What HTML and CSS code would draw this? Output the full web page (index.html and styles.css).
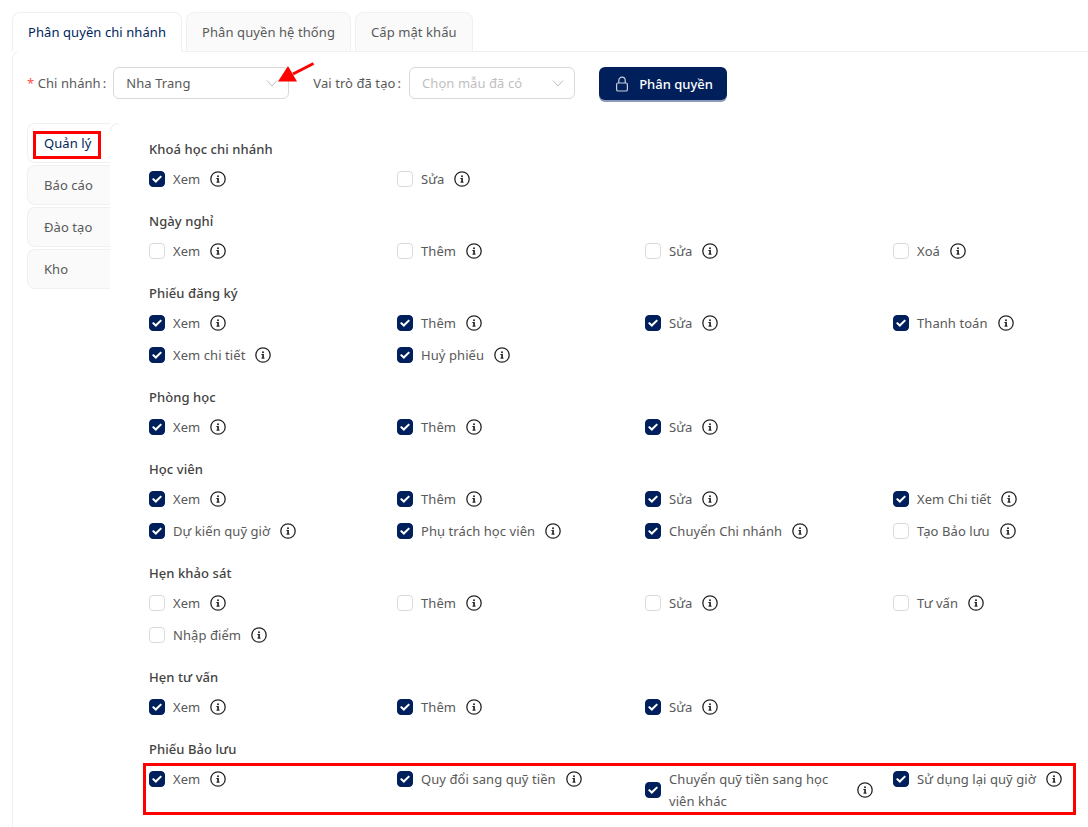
FILE: index.html
```html
<!DOCTYPE html>
<html lang="vi">
<head>
<meta charset="utf-8">
<title>Phân quyền</title>
<link rel="stylesheet" href="styles.css">
</head>
<body>
<svg class="defs" width="0" height="0" aria-hidden="true">
  <symbol id="info" viewBox="0 0 16 16">
    <circle cx="8" cy="8" r="7.2" fill="none" stroke="currentColor" stroke-width="1.3"/>
    <rect x="7.2" y="7" width="1.7" height="4.4" fill="currentColor"/>
    <rect x="6.4" y="7" width="1.6" height="1" fill="currentColor"/>
    <rect x="6.4" y="10.6" width="3.2" height="1" fill="currentColor"/>
    <circle cx="8" cy="5.2" r="1" fill="currentColor"/>
  </symbol>
  <symbol id="chev" viewBox="0 0 12 12">
    <path d="M1 3.5 L6 9 L11 3.5" fill="none" stroke="currentColor" stroke-width="1"/>
  </symbol>
</svg>
<div class="page">
  <nav class="tabs">
    <div class="tab active">Phân quyền chi nhánh</div>
    <div class="tab">Phân quyền hệ thống</div>
    <div class="tab">Cấp mật khẩu</div>
  </nav>
  <main class="panel">
    <div class="form-row">
      <span class="form-label"><i class="req">*</i> Chi nhánh<span class="colon">:</span></span>
      <div class="select branch">
        <span>Nha Trang</span>
        <svg class="chev"><use href="#chev"/></svg>
      </div>
      <span class="form-label role">Vai trò đã tạo<span class="colon">:</span></span>
      <div class="select roleselect">
        <span class="placeholder">Chọn mẫu đã có</span>
        <svg class="chev"><use href="#chev"/></svg>
      </div>
      <button class="btn" type="button">
        <svg class="lock" viewBox="0 0 14 16" width="14" height="16"><rect x="1.6" y="7" width="10.8" height="8" rx="1.6" fill="none" stroke="currentColor" stroke-width="1.2"/><path d="M3.8 7 V4.4 a3.2 3.2 0 0 1 6.4 0 V7" fill="none" stroke="currentColor" stroke-width="1.2"/></svg>
        Phân quyền
      </button>
    </div>
    <div class="split">
      <aside class="vtabs">
        <div class="vtab active">Quản lý</div>
        <div class="vtab">Báo cáo</div>
        <div class="vtab">Đào tạo</div>
        <div class="vtab">Kho</div>
      </aside>
      <section class="content">
        <div class="group">
          <h4>Khoá học chi nhánh</h4>
          <div class="grid">
            <label class="perm"><span class="cb on"></span><span class="txt">Xem</span><svg class="inf"><use href="#info"/></svg></label>
            <label class="perm"><span class="cb"></span><span class="txt">Sửa</span><svg class="inf"><use href="#info"/></svg></label>
          </div>
        </div>
        <div class="group">
          <h4>Ngày nghỉ</h4>
          <div class="grid">
            <label class="perm"><span class="cb"></span><span class="txt">Xem</span><svg class="inf"><use href="#info"/></svg></label>
            <label class="perm"><span class="cb"></span><span class="txt">Thêm</span><svg class="inf"><use href="#info"/></svg></label>
            <label class="perm"><span class="cb"></span><span class="txt">Sửa</span><svg class="inf"><use href="#info"/></svg></label>
            <label class="perm"><span class="cb"></span><span class="txt">Xoá</span><svg class="inf"><use href="#info"/></svg></label>
          </div>
        </div>
        <div class="group">
          <h4>Phiếu đăng ký</h4>
          <div class="grid">
            <label class="perm"><span class="cb on"></span><span class="txt">Xem</span><svg class="inf"><use href="#info"/></svg></label>
            <label class="perm"><span class="cb on"></span><span class="txt">Thêm</span><svg class="inf"><use href="#info"/></svg></label>
            <label class="perm"><span class="cb on"></span><span class="txt">Sửa</span><svg class="inf"><use href="#info"/></svg></label>
            <label class="perm"><span class="cb on"></span><span class="txt">Thanh toán</span><svg class="inf"><use href="#info"/></svg></label>
            <label class="perm"><span class="cb on"></span><span class="txt">Xem chi tiết</span><svg class="inf"><use href="#info"/></svg></label>
            <label class="perm"><span class="cb on"></span><span class="txt">Huỷ phiếu</span><svg class="inf"><use href="#info"/></svg></label>
          </div>
        </div>
        <div class="group">
          <h4>Phòng học</h4>
          <div class="grid">
            <label class="perm"><span class="cb on"></span><span class="txt">Xem</span><svg class="inf"><use href="#info"/></svg></label>
            <label class="perm"><span class="cb on"></span><span class="txt">Thêm</span><svg class="inf"><use href="#info"/></svg></label>
            <label class="perm"><span class="cb on"></span><span class="txt">Sửa</span><svg class="inf"><use href="#info"/></svg></label>
          </div>
        </div>
        <div class="group">
          <h4>Học viên</h4>
          <div class="grid">
            <label class="perm"><span class="cb on"></span><span class="txt">Xem</span><svg class="inf"><use href="#info"/></svg></label>
            <label class="perm"><span class="cb on"></span><span class="txt">Thêm</span><svg class="inf"><use href="#info"/></svg></label>
            <label class="perm"><span class="cb on"></span><span class="txt">Sửa</span><svg class="inf"><use href="#info"/></svg></label>
            <label class="perm"><span class="cb on"></span><span class="txt">Xem Chi tiết</span><svg class="inf"><use href="#info"/></svg></label>
            <label class="perm"><span class="cb on"></span><span class="txt">Dự kiến quỹ giờ</span><svg class="inf"><use href="#info"/></svg></label>
            <label class="perm"><span class="cb on"></span><span class="txt">Phụ trách học viên</span><svg class="inf"><use href="#info"/></svg></label>
            <label class="perm"><span class="cb on"></span><span class="txt">Chuyển Chi nhánh</span><svg class="inf"><use href="#info"/></svg></label>
            <label class="perm"><span class="cb"></span><span class="txt">Tạo Bảo lưu</span><svg class="inf"><use href="#info"/></svg></label>
          </div>
        </div>
        <div class="group">
          <h4>Hẹn khảo sát</h4>
          <div class="grid">
            <label class="perm"><span class="cb"></span><span class="txt">Xem</span><svg class="inf"><use href="#info"/></svg></label>
            <label class="perm"><span class="cb"></span><span class="txt">Thêm</span><svg class="inf"><use href="#info"/></svg></label>
            <label class="perm"><span class="cb"></span><span class="txt">Sửa</span><svg class="inf"><use href="#info"/></svg></label>
            <label class="perm"><span class="cb"></span><span class="txt">Tư vấn</span><svg class="inf"><use href="#info"/></svg></label>
            <label class="perm"><span class="cb"></span><span class="txt">Nhập điểm</span><svg class="inf"><use href="#info"/></svg></label>
          </div>
        </div>
        <div class="group">
          <h4>Hẹn tư vấn</h4>
          <div class="grid">
            <label class="perm"><span class="cb on"></span><span class="txt">Xem</span><svg class="inf"><use href="#info"/></svg></label>
            <label class="perm"><span class="cb on"></span><span class="txt">Thêm</span><svg class="inf"><use href="#info"/></svg></label>
            <label class="perm"><span class="cb on"></span><span class="txt">Sửa</span><svg class="inf"><use href="#info"/></svg></label>
          </div>
        </div>
        <div class="group">
          <h4>Phiếu Bảo lưu</h4>
          <div class="grid">
            <label class="perm"><span class="cb on"></span><span class="txt">Xem</span><svg class="inf"><use href="#info"/></svg></label>
            <label class="perm"><span class="cb on"></span><span class="txt">Quy đổi sang quỹ tiền</span><svg class="inf"><use href="#info"/></svg></label>
            <label class="perm"><span class="cb on"></span><span class="txt">Chuyển quỹ tiền sang học viên khác</span><svg class="inf"><use href="#info"/></svg></label>
            <label class="perm"><span class="cb on"></span><span class="txt">Sử dụng lại quỹ giờ</span><svg class="inf"><use href="#info"/></svg></label>
          </div>
        </div>
      </section>
    </div>
  </main>
  <div class="mark mark-tab"></div>
  <div class="mark mark-row"></div>
  <svg class="arrow" viewBox="0 0 40 24" width="40" height="24"><path d="M36.5 1.5 L16 12" stroke="#f00" stroke-width="3" fill="none"/><path d="M1 19.5 L11 4 L20 19.5 Z" fill="#f00"/></svg>
</div>
</body>
</html>
```
FILE: styles.css
```css
* { box-sizing: border-box; }
html, body { margin: 0; height: 827px; overflow: hidden; background: #fff; }
body { font-family: "Noto Sans", "Open Sans", sans-serif; font-size: 13px; line-height: 22px; letter-spacing: .07px; color: #595959; }
.defs { position: absolute; }
.page { position: relative; padding: 12px 0 0 12px; height: 827px; overflow: hidden; }

.tabs { display: flex; gap: 4px; height: 40px; position: relative; z-index: 1; }
.tab { height: 40px; padding: 8px 15px; background: #fafafa; border: 1px solid #f0f0f0; border-radius: 8px 8px 0 0; white-space: nowrap; letter-spacing: .08px; }
.tab.active { background: #fff; border-bottom-color: #fff; color: #001f5b; }

.panel { margin-top: -1px; border: 1px solid #f0f0f0; border-right: 0; border-bottom: 0; border-radius: 8px 0 0 0; padding: 15px 0 0 14px; }

.form-row { display: flex; align-items: center; height: 32px; margin-bottom: 24px; }
.form-label { white-space: nowrap; }
.req { color: #ff4d4f; font-style: normal; }
.colon { margin-left: 2px; }
.select { height: 32px; border: 1px solid #d9d9d9; border-radius: 6px; display: flex; align-items: center; justify-content: space-between; padding: 0 10px 0 12px; }
.branch { width: 176px; margin-left: 7px; margin-right: 24px; }
.roleselect { width: 166px; margin-left: 8px; margin-right: 24px; }
.placeholder { color: #bfbfbf; white-space: nowrap; }
.chev { width: 12px; height: 12px; color: #bfbfbf; flex: none; }
.btn { width: 128px; height: 33px; display: flex; align-items: center; justify-content: center; gap: 10px; padding: 0 0 0 2px; background: #001f5b; color: #fff; border: 0; border-radius: 6px; box-shadow: 0 2px 0 rgba(0, 31, 91, .45); font: inherit; font-weight: 500; margin-top: 1px; }
.lock { color: #c9d0de; flex: none; }

.split { display: flex; }
.vtabs { width: 83px; flex: none; display: flex; flex-direction: column; gap: 2px; }
.vtab { height: 40px; padding: 8px 0 8px 16px; background: #fafafa; border: 1px solid #f0f0f0; border-right: 0; border-radius: 8px 0 0 8px; }
.vtab.active { background: #fff; color: #001f5b; }

.content { flex: 1; min-width: 0; position: relative; padding: 15px 0 0 39px; }
.content::before { content: ""; position: absolute; left: 0; top: 0; width: 8px; height: 8px; border: solid #f0f0f0; border-width: 1px 0 0 1px; border-top-left-radius: 8px; }
.group { margin-bottom: 15px; }
.group h4 { margin: 0 0 3px; font-size: 13px; line-height: 22px; font-weight: 500; color: #434343; }
.grid { display: grid; grid-template-columns: repeat(4, 248px); align-items: start; }
.perm { display: flex; align-items: center; padding: 5px 20px 5px 0; }
.cb { width: 16px; height: 16px; flex: none; border: 1px solid #d9d9d9; border-radius: 4px; background: #fff; margin-right: 8px; position: relative; }
.cb.on { background: #001f5b; border-color: #001f5b; }
.cb.on::after { content: ""; position: absolute; inset: -1px; background: #fff; clip-path: polygon(3px 8.3px, 4.4px 6.9px, 6.8px 9.1px, 11.6px 4.4px, 13px 5.8px, 6.8px 12px); }
.txt { min-width: 0; }
.inf { width: 16px; height: 16px; flex: none; margin-left: 10px; color: #262626; }

.mark { position: absolute; border: 3px solid #f00; pointer-events: none; }
.mark-tab { left: 33px; top: 131px; width: 68px; height: 28px; }
.mark-row { left: 143px; top: 763px; width: 933px; height: 52px; }
.arrow { position: absolute; left: 277px; top: 62px; }
```
